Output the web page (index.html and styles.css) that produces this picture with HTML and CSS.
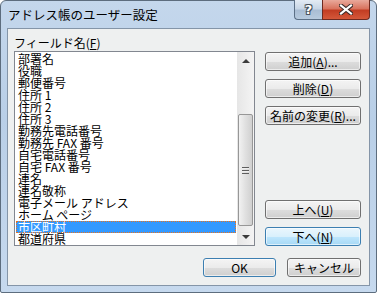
FILE: index.html
```html
<!DOCTYPE html>
<html lang="ja">
<head>
    <meta charset="UTF-8">
    <title>アドレス帳のユーザー設定</title>
    <link rel="stylesheet" href="styles.css">
</head>
<body>
    <div class="window">
        <!-- Title bar -->
        <div class="titlebar">
            <div class="title">アドレス帳のユーザー設定</div>
            <div class="controls">
                <div class="ctrl ctrl-help">?</div>
                <div class="ctrl ctrl-close">
                    <svg width="14" height="11" viewBox="0 0 14 11">
                        <path d="M2 1.5 L12 9.5 M12 1.5 L2 9.5" stroke="#3a2a28" stroke-width="4.2" stroke-linecap="square"/>
                        <path d="M2 1.5 L12 9.5 M12 1.5 L2 9.5" stroke="#ffffff" stroke-width="2.2" stroke-linecap="square"/>
                    </svg>
                </div>
            </div>
        </div>

        <!-- Client area -->
        <div class="client">
            <div class="main">
                <div class="field-col">
                    <div class="label">フィールド名(<u>F</u>)</div>
                    <div class="listbox">
                        <ul class="items">
                            <li>部署名</li>
                            <li>役職</li>
                            <li>郵便番号</li>
                            <li>住所 1</li>
                            <li>住所 2</li>
                            <li>住所 3</li>
                            <li>勤務先電話番号</li>
                            <li>勤務先 FAX 番号</li>
                            <li>自宅電話番号</li>
                            <li>自宅 FAX 番号</li>
                            <li>連名</li>
                            <li>連名敬称</li>
                            <li>電子メール アドレス</li>
                            <li>ホーム ページ</li>
                            <li class="selected">市区町村</li>
                            <li>都道府県</li>
                        </ul>
                        <div class="scrollbar">
                            <div class="sb-btn"><span class="arrow-up"></span></div>
                            <div class="sb-track">
                                <div class="sb-thumb"><span class="grip"></span></div>
                            </div>
                            <div class="sb-btn"><span class="arrow-down"></span></div>
                        </div>
                    </div>
                </div>

                <div class="button-col">
                    <div class="btn-group">
                        <button class="btn">追加(<u>A</u>)...</button>
                        <button class="btn">削除(<u>D</u>)</button>
                        <button class="btn">名前の変更(<u>R</u>)...</button>
                    </div>
                    <div class="btn-group">
                        <button class="btn">上へ(<u>U</u>)</button>
                        <button class="btn btn-hot">下へ(<u>N</u>)</button>
                    </div>
                </div>
            </div>

            <div class="footer">
                <button class="btn btn-ok btn-default">OK</button>
                <button class="btn btn-cancel">キャンセル</button>
            </div>
        </div>
    </div>
</body>
</html>
```

FILE: styles.css
```css
body {
    margin: 0;
    padding: 0;
    background-color: #ffffff;
    font-family: "Noto Sans CJK JP", "Liberation Sans", sans-serif;
    font-size: 12px;
    color: #000;
}

/* Window frame */
.window {
    width: 377px;
    height: 293px;
    box-sizing: border-box;
    border: 1px solid #5d6d7e;
    border-radius: 6px 6px 2px 2px;
    padding: 0 6px 6px 6px;
    background: linear-gradient(to bottom, #c4d7ec 0%, #b9cfe7 40%, #c6d9ee 100%);
    display: flex;
    flex-direction: column;
}

.titlebar {
    height: 27px;
    display: flex;
    justify-content: space-between;
    align-items: flex-start;
}

.title {
    padding: 6px 0 0 1px;
    font-size: 12.5px;
    line-height: 16px;
    color: #000;
}

.controls {
    display: flex;
    margin-top: -1px;
}

.ctrl {
    height: 20px;
    box-sizing: border-box;
    display: flex;
    justify-content: center;
    align-items: center;
    border: 1px solid #5b6f86;
    border-top: none;
}

.ctrl-help {
    width: 28px;
    border-radius: 0 0 0 4px;
    border-right: none;
    background: linear-gradient(to bottom, #e3ebf4 0%, #c8d6e6 45%, #a9bdd4 55%, #b7cade 100%);
    color: #fff;
    font-family: "DejaVu Sans", sans-serif;
    font-weight: bold;
    font-size: 13px;
    text-shadow: 0 0 1px #333, 1px 1px 0 #4a5563, -1px -1px 0 #4a5563, 1px -1px 0 #4a5563, -1px 1px 0 #4a5563;
}

.ctrl-close {
    width: 48px;
    border-color: #6e2a20;
    border-radius: 0 0 4px 0;
    background: linear-gradient(to bottom, #e9a99b 0%, #d9745f 45%, #c23d23 55%, #d4583a 100%);
}

/* Client area */
.client {
    height: 258px;
    box-sizing: border-box;
    border: 1px solid #8495a8;
    background-color: #eef0f0;
    padding: 6px 8px 9px 6px;
    display: flex;
    flex-direction: column;
    gap: 12px;
}

.main {
    display: flex;
    gap: 10px;
}

.field-col {
    display: flex;
    flex-direction: column;
}

.label {
    height: 16px;
    line-height: 16px;
}

.listbox {
    width: 241px;
    height: 195px;
    box-sizing: border-box;
    border: 1px solid #828790;
    background-color: #ffffff;
    display: flex;
}

.items {
    list-style: none;
    margin: 0;
    padding: 1px 1px 0 1px;
    flex: 1;
    overflow: hidden;
}

.items li {
    height: 12px;
    line-height: 12px;
    padding-left: 2px;
    white-space: nowrap;
}

.items li.selected {
    background-color: #3399ff;
    color: #ffffff;
    outline: 1px dotted #e8731e;
    outline-offset: -1px;
}

/* Scrollbar */
.scrollbar {
    width: 17px;
    display: flex;
    flex-direction: column;
    background: linear-gradient(to right, #e6e6e6, #f4f4f4);
}

.sb-btn {
    height: 17px;
    display: flex;
    justify-content: center;
    align-items: center;
}

.arrow-up {
    width: 0;
    height: 0;
    border-left: 4px solid transparent;
    border-right: 4px solid transparent;
    border-bottom: 4px solid #3b3b3b;
}

.arrow-down {
    width: 0;
    height: 0;
    border-left: 4px solid transparent;
    border-right: 4px solid transparent;
    border-top: 4px solid #3b3b3b;
}

.sb-track {
    flex: 1;
    padding-top: 45px;
}

.sb-thumb {
    height: 112px;
    margin: 0 1px;
    box-sizing: border-box;
    border: 1px solid #979797;
    border-radius: 2px;
    background: linear-gradient(to right, #f2f2f2 0%, #e0e0e0 50%, #d0d0d0 100%);
    display: flex;
    justify-content: center;
    align-items: center;
}

.grip {
    width: 7px;
    height: 7px;
    background: repeating-linear-gradient(to bottom, #5e5e5e 0, #5e5e5e 1px, #eeeeee 1px, #eeeeee 2px, transparent 2px, transparent 3px);
}

/* Buttons */
.button-col {
    display: flex;
    flex-direction: column;
    justify-content: space-between;
    padding-top: 17px;
}

.btn-group {
    display: flex;
    flex-direction: column;
    gap: 8px;
}

.btn {
    width: 96px;
    height: 19px;
    box-sizing: border-box;
    padding: 0;
    border: 1px solid #707070;
    border-radius: 3px;
    background: linear-gradient(to bottom, #f4f4f4 0%, #ebebeb 50%, #dddddd 51%, #cfcfcf 100%);
    box-shadow: inset 0 0 0 1px rgba(255, 255, 255, 0.6);
    font-family: "Noto Sans CJK JP", "Liberation Sans", sans-serif;
    font-size: 12px;
    line-height: 15px;
    color: #000;
}

.btn u {
    text-underline-offset: 1px;
}

.btn-hot {
    border-color: #3c7fb1;
    background: linear-gradient(to bottom, #eaf6fd 0%, #d9f0fc 50%, #bee6fd 51%, #a7d9f5 100%);
}

.btn-default {
    border-color: #3c7fb1;
}

.footer {
    display: flex;
    justify-content: flex-end;
    gap: 11px;
}

.btn-ok {
    width: 73px;
}

.btn-cancel {
    width: 74px;
}
```
